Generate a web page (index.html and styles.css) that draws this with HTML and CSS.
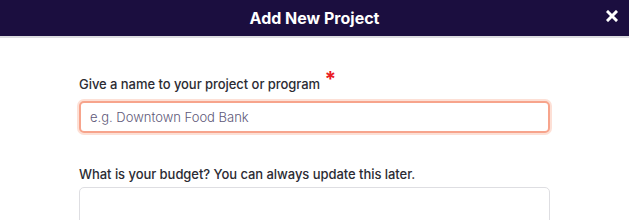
FILE: index.html
```html
<!DOCTYPE html>
<html>
<head>
<meta charset="utf-8">
<link rel="stylesheet" href="styles.css">
</head>
<body>
<div class="modal">
  <header class="modal-header">
    <h1 class="modal-title">Add New Project</h1>
    <button class="close-btn" aria-label="Close">
      <svg width="12" height="12" viewBox="0 0 12 12"><path d="M2 2 L10 10 M10 2 L2 10" stroke="#fff" stroke-width="3" stroke-linecap="square"/></svg>
    </button>
  </header>
  <main class="modal-body">
    <div class="field">
      <label class="field-label required">Give a name to your project or program <span class="req">*</span></label>
      <input class="text-input focused" type="text" placeholder="e.g. Downtown Food Bank">
    </div>
    <div class="field">
      <label class="field-label">What is your budget? You can always update this later.</label>
      <div class="text-input tall"></div>
    </div>
  </main>
</div>
</body>
</html>
```
FILE: styles.css
```css
* { box-sizing: border-box; }
html, body { margin: 0; padding: 0; background: #fff; }
body { font-family: "Inter", "Liberation Sans", sans-serif; overflow: hidden; }
.modal-header {
  height: 38px;
  background: #1b0e3f;
  border-bottom: 2px solid #dcdce0;
  display: flex;
  align-items: center;
  justify-content: center;
  position: relative;
}
.modal-title {
  margin: 0;
  color: #fff;
  font-size: 16px;
  font-weight: 700;
  letter-spacing: 0;
}
.close-btn {
  position: absolute;
  right: 11px;
  top: 10px;
  background: none;
  border: 0;
  padding: 0;
  width: 12px;
  height: 12px;
  display: flex;
}
.modal-body {
  width: 471px;
  margin: 0 auto;
  padding-top: 38px;
}
.field { display: flex; flex-direction: column; }
.field + .field { margin-top: 33px; }
.field-label {
  font-size: 13px;
  font-weight: 500;
  color: #2b2b33;
  margin-bottom: 5px;
  line-height: 16px;
  letter-spacing: -0.05px;
}
.field-label.required { margin-bottom: 9px; }
.req { color: #ea1c24; font-size: 21px; font-weight: 700; vertical-align: 2px; line-height: 0; margin-left: 1px; }
.text-input {
  width: 471px;
  height: 32px;
  border: 1px solid #dedee2;
  border-radius: 5px;
  font-family: inherit;
  font-size: 13px;
  padding: 0 10px;
  outline: none;
  background: #fff;
}
.text-input.focused {
  border: 2px solid #f7a48c;
  box-shadow: 0 0 0 2px #fde0d6;
  padding: 0 9px;
}
.text-input::placeholder { color: #5e5878; font-weight: 300; }
.text-input.tall { height: 60px; }
```
